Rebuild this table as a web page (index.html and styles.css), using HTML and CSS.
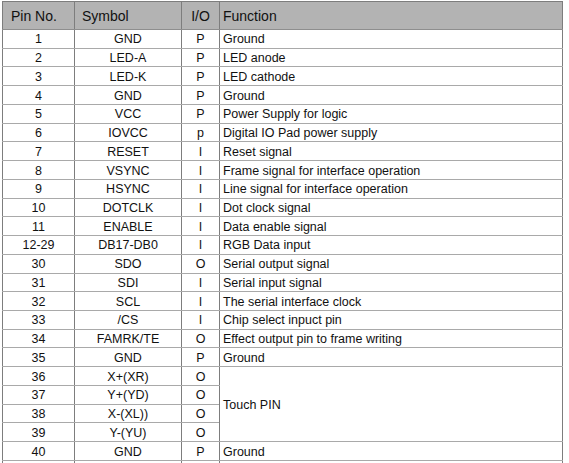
FILE: index.html
```html
<!DOCTYPE html>
<html>
<head>
<meta charset="utf-8">
<link rel="stylesheet" href="styles.css">
</head>
<body>
<table class="pins">
  <colgroup>
    <col class="c-pin"><col class="c-sym"><col class="c-io"><col class="c-fn">
  </colgroup>
  <thead>
    <tr class="head">
      <th class="h-pin">Pin No.</th>
      <th class="h-sym">Symbol</th>
      <th class="h-io">I/O</th>
      <th class="h-fn">Function</th>
    </tr>
  </thead>
  <tbody>
    <tr><td>1</td><td>GND</td><td>P</td><td class="fn">Ground</td></tr>
    <tr><td>2</td><td>LED-A</td><td>P</td><td class="fn">LED anode</td></tr>
    <tr><td>3</td><td>LED-K</td><td>P</td><td class="fn">LED cathode</td></tr>
    <tr><td>4</td><td>GND</td><td>P</td><td class="fn">Ground</td></tr>
    <tr><td>5</td><td>VCC</td><td>P</td><td class="fn">Power Supply for logic</td></tr>
    <tr><td>6</td><td>IOVCC</td><td>p</td><td class="fn">Digital IO Pad power supply</td></tr>
    <tr><td>7</td><td>RESET</td><td>I</td><td class="fn">Reset signal</td></tr>
    <tr><td>8</td><td>VSYNC</td><td>I</td><td class="fn">Frame signal for interface operation</td></tr>
    <tr><td>9</td><td>HSYNC</td><td>I</td><td class="fn">Line signal for interface operation</td></tr>
    <tr><td>10</td><td>DOTCLK</td><td>I</td><td class="fn">Dot clock signal</td></tr>
    <tr><td>11</td><td>ENABLE</td><td>I</td><td class="fn">Data enable signal</td></tr>
    <tr><td>12-29</td><td>DB17-DB0</td><td>I</td><td class="fn">RGB Data input</td></tr>
    <tr><td>30</td><td>SDO</td><td>O</td><td class="fn">Serial output signal</td></tr>
    <tr><td>31</td><td>SDI</td><td>I</td><td class="fn">Serial input signal</td></tr>
    <tr><td>32</td><td>SCL</td><td>I</td><td class="fn">The serial interface clock</td></tr>
    <tr><td>33</td><td>/CS</td><td>I</td><td class="fn">Chip select inpuct pin</td></tr>
    <tr><td>34</td><td>FAMRK/TE</td><td>O</td><td class="fn">Effect output pin to frame writing</td></tr>
    <tr><td>35</td><td>GND</td><td>P</td><td class="fn">Ground</td></tr>
    <tr><td>36</td><td>X+(XR)</td><td>O</td><td class="fn" rowspan="4">Touch PIN</td></tr>
    <tr><td>37</td><td>Y+(YD)</td><td>O</td></tr>
    <tr><td>38</td><td>X-(XL))</td><td>O</td></tr>
    <tr><td>39</td><td>Y-(YU)</td><td>O</td></tr>
    <tr><td>40</td><td>GND</td><td>P</td><td class="fn">Ground</td></tr>
    <tr class="tail"><td></td><td></td><td></td><td class="fn"></td></tr>
  </tbody>
</table>
</body>
</html>
```
FILE: styles.css
```css
html, body {
  margin: 0;
  padding: 0;
  background: #ffffff;
  overflow: hidden;
  height: 463px;
}
body {
  padding: 1px 0 0 2px;
  font-family: "Liberation Sans", Arial, sans-serif;
  color: #111111;
}
.pins {
  border-collapse: collapse;
  table-layout: fixed;
  width: 560px;
}
.c-pin { width: 72px; }
.c-sym { width: 107px; }
.c-io { width: 38px; }
.c-fn { width: 343px; }

.pins th,
.pins td {
  border-left: 1px solid #7d7d7d;
  border-right: 1px solid #7d7d7d;
  border-top: 1px solid #a9a9a9;
  border-bottom: 1px solid #a9a9a9;
  padding: 0;
  white-space: nowrap;
  overflow: hidden;
}
.head th {
  background: #b3b3b3;
  height: 26px;
  font-size: 14px;
  font-weight: normal;
  text-align: left;
  border-top: 1px solid #7d7d7d;
  border-bottom: 1px solid #8e8e8e;
  padding-top: 1px;
}
.h-pin { padding-left: 8px !important; }
.h-sym { padding-left: 7px !important; }
.h-io { text-align: center !important; }
.h-fn { padding-left: 3px !important; }

.pins td {
  height: 16.74px;
  font-size: 12.5px;
  line-height: 14px;
  text-align: center;
  padding-top: 1px;
}
.pins td.fn {
  text-align: left;
  padding-left: 3px;
}
.tail td {
  height: 20px;
}
```
